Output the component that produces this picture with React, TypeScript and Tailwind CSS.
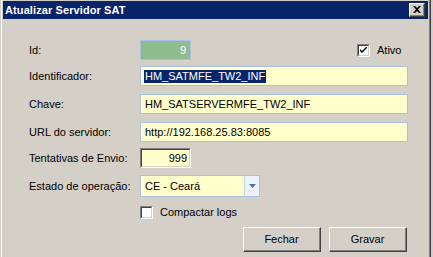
import type { ReactNode } from 'react';

const FONT = { fontFamily: '"Liberation Sans", Arial, sans-serif' };

function Label({ children }: { children: ReactNode }) {
  return <div className="w-[111px] shrink-0 text-[11px] text-black leading-none">{children}</div>;
}

function TextField({ value, selected }: { value: string; selected?: boolean }) {
  return (
    <div className="flex-1 h-[20px] flex items-center border border-[#a9c0e2] bg-[#ffffcc] pl-[4px] text-[11px] text-black leading-none">
      {selected ? <span className="bg-[#0a246a] text-white leading-[13px] px-px -ml-px">{value}</span> : value}
    </div>
  );
}

function Checkbox({ checked }: { checked?: boolean }) {
  return (
    <div className="w-[13px] h-[13px] border-t border-l border-[#808080] border-b border-r border-b-white border-r-white">
      <div className="w-full h-full border-t border-l border-[#404040] border-b border-r border-b-[#d4d0c8] border-r-[#d4d0c8] bg-white flex items-center justify-center">
        {checked && (
          <svg width="7" height="7" viewBox="0 0 7 7">
            <path d="M0 2 L0 4 L2 6 L7 1 L7 -1 L2 4 Z" fill="#000" />
          </svg>
        )}
      </div>
    </div>
  );
}

function Button({ children }: { children: ReactNode }) {
  return (
    <div className="w-[78px] h-[25px] border-t border-l border-white border-b border-r border-b-[#404040] border-r-[#404040]">
      <div className="w-full h-full border-b border-r border-[#808080] border-t-0 border-l-0 flex items-center justify-center text-[11px] text-black leading-none bg-[#d4d0c8]">
        {children}
      </div>
    </div>
  );
}

export default function App() {
  return (
    <div className="w-[433px] h-[257px] bg-[#d4d0c8] overflow-hidden" style={FONT}>
      <div className="w-[431px] h-[257px] border-l border-[#d4d0c8] border-r border-r-[#404040]">
        <div className="h-full border-l border-white border-r border-r-[#808080] pl-px pr-px pt-px flex flex-col">
          {/* barra de título */}
          <div className="h-[18px] shrink-0 bg-[#0a246a] flex items-center pl-[2px] pr-[3px]">
            <span className="text-white font-bold text-[11px] leading-none tracking-[0.1px]">Atualizar Servidor SAT</span>
            <div className="ml-auto w-[16px] h-[14px] border-t border-l border-white border-b border-r border-b-[#404040] border-r-[#404040]">
              <div className="w-full h-full border-b border-r border-[#808080] border-t-0 border-l-0 bg-[#d4d0c8] flex items-center justify-center">
                <svg width="8" height="7" viewBox="0 0 8 7">
                  <path d="M0 0 L2 0 L4 2 L6 0 L8 0 L5 3.5 L8 7 L6 7 L4 5 L2 7 L0 7 L3 3.5 Z" fill="#000" />
                </svg>
              </div>
            </div>
          </div>

          {/* corpo */}
          <div className="flex flex-col pl-[26px] pr-[20px]">
            <div className="mt-[21px] h-[20px] flex items-center">
              <Label>Id:</Label>
              <div className="w-[51px] h-[20px] border border-[#a9c0e2] bg-[#8fbc8f] flex items-center justify-end pr-[4px] text-[11px] text-white leading-none">9</div>
              <div className="ml-[166px] flex items-center gap-[7px]">
                <Checkbox checked />
                <span className="text-[11px] text-black leading-none">Ativo</span>
              </div>
            </div>

            <div className="mt-[6px] h-[20px] flex items-center">
              <Label>Identificador:</Label>
              <TextField value="HM_SATMFE_TW2_INF" selected />
            </div>

            <div className="mt-[8px] h-[20px] flex items-center">
              <Label>Chave:</Label>
              <TextField value="HM_SATSERVERMFE_TW2_INF" />
            </div>

            <div className="mt-[8px] h-[20px] flex items-center">
              <Label>URL do servidor:</Label>
              <TextField value="http://192.168.25.83:8085" />
            </div>

            <div className="mt-[6px] h-[20px] flex items-center">
              <Label>Tentativas de Envio:</Label>
              <div className="w-[51px] h-[20px] border-t border-l border-[#808080] border-b border-r border-b-white border-r-white">
                <div className="w-full h-full border-t border-l border-[#404040] border-b border-r border-b-[#d4d0c8] border-r-[#d4d0c8] bg-[#ffffcc] flex items-center justify-end pr-[2px] text-[11px] text-black leading-none">
                  999
                </div>
              </div>
            </div>

            <div className="mt-[7px] h-[22px] flex items-center">
              <Label>Estado de operação:</Label>
              <div className="w-[120px] h-[22px] border border-[#a9c0e2] bg-[#ffffcc] flex items-stretch">
                <div className="flex-1 flex items-center pl-[4px] text-[11px] text-black leading-none">CE - Ceará</div>
                <div className="w-[15px] bg-[#eef3fb] border-l border-[#c6d6ee] flex items-center justify-center">
                  <svg width="7" height="4" viewBox="0 0 7 4">
                    <path d="M0 0 L7 0 L3.5 4 Z" fill="#4d6fae" />
                  </svg>
                </div>
              </div>
            </div>

            <div className="mt-[9px] h-[13px] flex items-center pl-[111px] gap-[7px]">
              <Checkbox />
              <span className="text-[11px] text-black leading-none">Compactar logs</span>
            </div>

            <div className="mt-[8px] flex justify-end gap-[8px] pr-px">
              <Button>Fechar</Button>
              <Button>Gravar</Button>
            </div>
          </div>
        </div>
      </div>
    </div>
  );
}
